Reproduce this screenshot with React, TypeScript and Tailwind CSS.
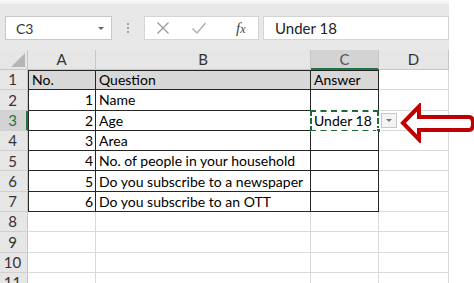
import * as React from 'react';

const FONT = { fontFamily: 'Lato, "Open Sans", sans-serif' };

const cols = ['A', 'B', 'C', 'D'];

const rows: [string, string, string][] = [
    ['No.', 'Question', 'Answer'],
    ['1', 'Name', ''],
    ['2', 'Age', 'Under 18'],
    ['3', 'Area', ''],
    ['4', 'No. of people in your household', ''],
    ['5', 'Do you subscribe to a newspaper', ''],
    ['6', 'Do you subscribe to an OTT', ''],
    ['', '', ''],
    ['', '', ''],
    ['', '', ''],
    ['', '', ''],
];

function FormulaBar() {
    return (
        <div className="h-[46px] bg-[#e8e8e8] flex items-start pt-[12px] pl-[5px] text-[14px] text-[#333]">
            <div className="w-[107px] h-[24px] bg-white border border-[#c8c8c8] flex items-center justify-between pl-[10px] pr-[7px]">
                <span>C3</span>
                <span className="w-0 h-0 border-l-[3px] border-r-[3px] border-t-[3px] border-l-transparent border-r-transparent border-t-[#666]" />
            </div>
            <div className="w-[32px] h-[24px] flex flex-col items-center justify-center gap-[2px]">
                <span className="w-[2px] h-[2px] bg-[#a0a0a0]" />
                <span className="w-[2px] h-[2px] bg-[#a0a0a0]" />
                <span className="w-[2px] h-[2px] bg-[#a0a0a0]" />
            </div>
            <div className="w-[115px] h-[24px] bg-white border border-[#d4d4d4] flex items-center pl-[11px]">
                <svg width="14" height="14" viewBox="0 0 14 14">
                    <path d="M1.5 1.5 L12.5 12.5 M12.5 1.5 L1.5 12.5" stroke="#9a9a9a" strokeWidth="1.3" fill="none" />
                </svg>
                <svg width="16" height="14" viewBox="0 0 16 14" className="ml-[21px]">
                    <path d="M1.5 7.5 L6 12 L14.5 2" stroke="#b0b0b0" strokeWidth="1.5" fill="none" />
                </svg>
                <span className="ml-[29px] italic text-[15px] text-[#444]" style={{ fontFamily: '"Liberation Serif", serif' }}>
                    f<span className="text-[12px]">x</span>
                </span>
            </div>
            <div className="ml-[4px] w-[186px] h-[24px] bg-white border border-[#d4d4d4] flex items-center pl-[11px] text-[15px] text-[#222]">
                Under 18
            </div>
        </div>
    );
}

function ColumnHeaders() {
    return (
        <>
            <div className="h-[20px] bg-[#e6e6e6] border-r border-b border-[#c6c6c6] flex items-end justify-end pr-[2px] pb-[2px]">
                <svg width="14" height="14" viewBox="0 0 14 14">
                    <path d="M14 0 L14 14 L0 14 Z" fill="#b5b5b5" />
                </svg>
            </div>
            {cols.map((c) => (
                <div
                    key={c}
                    className={
                        c === 'C'
                            ? 'h-[20px] bg-[#d3d3d3] border-r border-[#c6c6c6] border-b-2 border-b-[#217346] flex items-center justify-center text-[15px] text-[#555]'
                            : 'h-[20px] bg-[#e6e6e6] border-r border-b border-[#c6c6c6] flex items-center justify-center text-[15px] text-[#333]'
                    }
                >
                    {c}
                </div>
            ))}
        </>
    );
}

function Row({ index, cells }: { index: number; cells: [string, string, string] }) {
    const inTable = index <= 7;
    const isHead = index === 1;
    const isActive = index === 3;
    const line = inTable ? 'border-[#262626]' : 'border-[#d9d9d9]';
    const fill = isHead ? 'bg-[#d8d8d8]' : 'bg-white';
    const top = isHead ? 'shadow-[inset_1px_1px_0_#262626]' : inTable ? 'shadow-[inset_1px_0_0_#262626]' : '';
    const topB = isHead ? 'shadow-[inset_0_1px_0_#262626]' : '';

    return (
        <>
            <div
                className={
                    isActive
                        ? 'h-[20.3px] bg-[#d3d3d3] border-b border-[#d0d0d0] border-r-2 border-r-[#217346] flex items-center justify-center pr-[1px] text-[15px] text-[#217346]'
                        : 'h-[20.3px] bg-[#e6e6e6] border-b border-r border-[#d0d0d0] border-r-[#c6c6c6] flex items-center justify-center pr-[2px] text-[15px] text-[#333]'
                }
            >
                {index}
            </div>
            <div className={`h-[20.3px] ${fill} ${top} border-r border-b ${line} flex items-center ${isHead ? 'justify-start pl-[4px]' : 'justify-end pr-[2px]'} text-[14px] text-black`}>
                {cells[0]}
            </div>
            <div className={`h-[20.3px] ${fill} ${topB} border-r border-b ${line} flex items-center pl-[3px] text-[14px] text-black whitespace-nowrap`}>
                {cells[1]}
            </div>
            <div className={`relative h-[20.3px] ${fill} ${topB} border-r border-b ${line} flex items-center pl-[3px] text-[14px] text-black`}>
                {isActive ? (
                    <>
                        <div className="absolute -left-[1px] -top-[1px] w-[69px] h-[22px] border-2 border-dashed border-[#1b6b3a] bg-white" />
                        <div className="absolute right-[-3px] bottom-[-3px] w-[5px] h-[5px] bg-[#1b6b3a] border border-white" />
                        <span className="relative">{cells[2]}</span>
                        <div className="absolute left-[70px] top-[2px] w-[16px] h-[15px] bg-[#f3f3f3] border border-[#c8c8c8] flex items-center justify-center z-10">
                            <span className="w-0 h-0 border-l-[3px] border-r-[3px] border-t-[3px] border-l-transparent border-r-transparent border-t-[#777]" />
                        </div>
                    </>
                ) : (
                    cells[2]
                )}
            </div>
            <div className="h-[20.3px] bg-white border-r border-b border-[#d9d9d9]" />
        </>
    );
}

export default function App() {
    return (
        <div className="w-[474px] h-[283px] bg-white overflow-hidden relative" style={FONT}>
            <div className="w-[449px]">
                <div className="h-[4px] bg-gradient-to-b from-[#fafafa] to-[#f0f0f0]" />
                <FormulaBar />
                <div className="grid grid-cols-[28px_68px_215px_68px_70px]">
                    <ColumnHeaders />
                    {rows.map((r, i) => (
                        <Row key={i} index={i + 1} cells={r} />
                    ))}
                </div>
            </div>
            <svg className="absolute left-[400px] top-[103px]" width="74" height="40" viewBox="0 0 74 40">
                <path
                    d="M3 20 L19 3.5 L19 14 L69 14 Q73 14 73 20.5 Q73 27 69 27 L19 27 L19 36.5 Z"
                    fill="white"
                    stroke="#c00000"
                    strokeWidth="4"
                    strokeLinejoin="miter"
                />
            </svg>
        </div>
    );
}
